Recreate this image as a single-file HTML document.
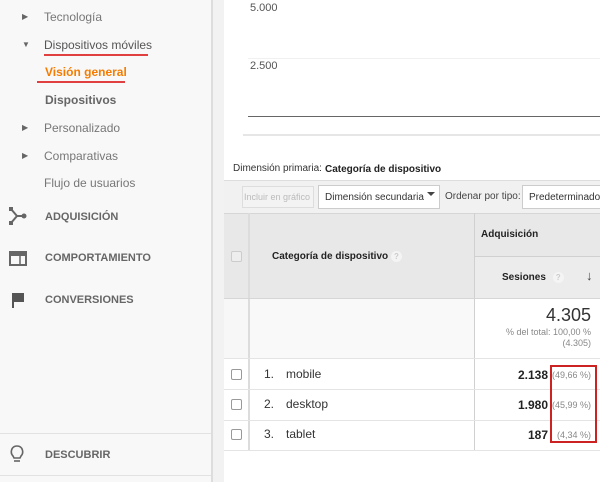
<!DOCTYPE html>
<html><head><meta charset="utf-8"><style>
*{margin:0;padding:0;box-sizing:border-box}
body{width:600px;height:482px;overflow:hidden;font-family:"Liberation Sans",Arial,sans-serif;background:#fff;position:relative}
.a{position:absolute}
.sb{left:0;top:0;width:211px;height:482px;background:#f8f8f8}
.nav{font-size:12px;color:#777;left:44px}
.tri{font-size:8px;color:#666;left:22px}
.big{font-size:11px;font-weight:bold;color:#666;left:45px}
.cb{width:11px;height:11px;border:1px solid #999;border-radius:2px;background:#fff}
</style></head><body>
<div class="a sb"></div>
<div class="a" style="left:211px;top:0;width:2px;height:482px;background:#ddd"></div>
<div class="a" style="left:213px;top:0;width:11px;height:482px;background:#f2f2f2"></div>

<div class="a tri" style="top:12px">▶</div><div class="a nav" style="top:10px">Tecnología</div>
<div class="a tri" style="top:40px">▼</div><div class="a nav" style="top:38px;color:#555">Dispositivos móviles</div>
<div class="a" style="left:44px;top:54px;width:104px;height:2px;background:#e04040"></div>
<div class="a" style="left:45px;top:65px;font-size:12px;font-weight:bold;color:#f57c00">Visión general</div>
<div class="a" style="left:37px;top:81px;width:88px;height:2px;background:#e04040"></div>
<div class="a" style="left:45px;top:93px;font-size:12px;font-weight:bold;color:#666">Dispositivos</div>
<div class="a tri" style="top:123px">▶</div><div class="a nav" style="top:121px">Personalizado</div>
<div class="a tri" style="top:151px">▶</div><div class="a nav" style="top:149px">Comparativas</div>
<div class="a nav" style="top:176px">Flujo de usuarios</div>

<svg class="a" style="left:9px;top:207px" width="18" height="18" viewBox="0 0 18 18"><path d="M2 2 L8 9 L15 9 M8 9 L2 16" stroke="#666" stroke-width="2" fill="none"/><rect x="0" y="0" width="4" height="4" fill="#666"/><rect x="0" y="14" width="4" height="4" fill="#666"/><circle cx="15" cy="9" r="2.5" fill="#666"/></svg>
<div class="a big" style="top:211px">ADQUISICIÓN</div>
<svg class="a" style="left:9px;top:251px" width="18" height="15"><rect x="1" y="1" width="16" height="13" fill="none" stroke="#666" stroke-width="2"/><rect x="1" y="1" width="16" height="4" fill="#666"/><line x1="11" y1="5" x2="11" y2="14" stroke="#666" stroke-width="1.5"/></svg>
<div class="a big" style="top:252px">COMPORTAMIENTO</div>
<svg class="a" style="left:11px;top:292px" width="15" height="17"><path d="M1 1 H13 V10 H3 V16 H1 Z" fill="#555"/></svg>
<div class="a big" style="top:294px">CONVERSIONES</div>
<div class="a" style="left:0;top:433px;width:211px;height:1px;background:#e2e2e2"></div>
<svg class="a" style="left:10px;top:445px" width="14" height="20"><path d="M3 11 C0 8 1 1 7 1 C13 1 14 8 11 11 L10 13 H4 Z" fill="none" stroke="#666" stroke-width="1.6"/><line x1="4" y1="16" x2="10" y2="16" stroke="#666" stroke-width="1.6"/></svg>
<div class="a big" style="top:449px">DESCUBRIR</div>
<div class="a" style="left:0;top:475px;width:211px;height:1px;background:#e2e2e2"></div>

<div class="a" style="left:250px;top:2px;font-size:11px;color:#555">5.000</div>
<div class="a" style="left:248px;top:58px;width:352px;height:1px;background:#f0f0f0"></div>
<div class="a" style="left:250px;top:60px;font-size:11px;color:#555">2.500</div>
<div class="a" style="left:248px;top:116px;width:352px;height:1px;background:#666"></div>
<div class="a" style="left:243px;top:134px;width:357px;height:2px;background:#e6e6e6"></div>

<div class="a" style="left:233px;top:163px;font-size:10px;color:#333">Dimensión primaria:</div>
<div class="a" style="left:325px;top:164px;font-size:10px;font-weight:bold;color:#222">Categoría de dispositivo</div>
<div class="a" style="left:224px;top:180px;width:376px;height:33px;background:#f1f1f1;border-top:1px solid #ddd"></div>
<div class="a" style="left:242px;top:186px;width:72px;height:22px;border:1px solid #ddd;background:#f3f3f3;font-size:9px;color:#bbb;padding:5px 1px;white-space:nowrap;overflow:hidden">Incluir en gráfico</div>
<div class="a" style="left:318px;top:185px;width:122px;height:24px;border:1px solid #ccc;background:#fff;font-size:10px;color:#333;padding:6px 6px;white-space:nowrap">Dimensión secundaria</div>
<div class="a" style="left:427px;top:192px;width:0;height:0;border-left:4px solid transparent;border-right:4px solid transparent;border-top:4px solid #444"></div>
<div class="a" style="left:445px;top:191px;font-size:10px;color:#444;white-space:nowrap">Ordenar por tipo:</div>
<div class="a" style="left:522px;top:185px;width:80px;height:24px;border:1px solid #ccc;background:#fff;font-size:10px;color:#333;padding:6px 6px;white-space:nowrap">Predeterminado</div>

<div class="a" style="left:224px;top:213px;width:376px;height:85px;background:#e8e8e8;border-top:1px solid #d6d6d6"></div>
<div class="a" style="left:474px;top:256px;width:126px;height:42px;background:#ececec;border-top:1px solid #d0d0d0"></div>
<div class="a" style="left:474px;top:213px;width:1px;height:238px;background:#d0d0d0"></div>
<div class="a" style="left:248px;top:213px;width:2px;height:238px;background:#dcdcdc"></div>
<div class="a cb" style="left:231px;top:251px;background:#eee;border-color:#ccc"></div>
<div class="a" style="left:272px;top:251px;font-size:10px;font-weight:bold;color:#222">Categoría de dispositivo <span style="display:inline-block;width:11px;height:11px;border-radius:50%;background:#f4f4f4;color:#ccc;font-size:8px;text-align:center;line-height:11px">?</span></div>
<div class="a" style="left:481px;top:229px;font-size:10px;font-weight:bold;color:#222">Adquisición</div>
<div class="a" style="left:502px;top:272px;font-size:10px;font-weight:bold;color:#222">Sesiones <span style="display:inline-block;width:11px;height:11px;border-radius:50%;background:#f4f4f4;color:#ccc;font-size:8px;text-align:center;line-height:11px;margin-left:4px">?</span></div>
<div class="a" style="left:586px;top:268px;font-size:13px;color:#444">↓</div>

<div class="a" style="left:224px;top:298px;width:376px;height:1px;background:#d6d6d6"></div>
<div class="a" style="left:224px;top:299px;width:24px;height:59px;background:#f7f7f7"></div>
<div class="a" style="left:250px;top:299px;width:224px;height:59px;background:#f9f9f9"></div>
<div class="a" style="left:475px;top:305px;width:116px;text-align:right;font-size:18px;color:#333">4.305</div>
<div class="a" style="left:475px;top:327px;width:116px;text-align:right;font-size:9px;color:#888;line-height:11px">% del total: 100,00 %<br>(4.305)</div>

<div class="a" style="left:224px;top:358px;width:376px;height:1px;background:#e4e4e4"></div>
<div class="a" style="left:224px;top:389px;width:376px;height:1px;background:#e4e4e4"></div>
<div class="a" style="left:224px;top:420px;width:376px;height:1px;background:#e4e4e4"></div>
<div class="a" style="left:224px;top:450px;width:376px;height:1px;background:#e4e4e4"></div>

<div class="a cb" style="left:231px;top:369px"></div>
<div class="a" style="left:264px;top:367px;font-size:12px;color:#333">1.</div><div class="a" style="left:286px;top:367px;font-size:12px;color:#333">mobile</div>
<div class="a" style="left:480px;top:368px;width:68px;text-align:right;font-size:12px;font-weight:bold;color:#222">2.138</div>
<div class="a" style="left:552px;top:370px;font-size:9px;color:#888">(49,66 %)</div>
<div class="a cb" style="left:231px;top:399px"></div>
<div class="a" style="left:264px;top:397px;font-size:12px;color:#333">2.</div><div class="a" style="left:286px;top:397px;font-size:12px;color:#333">desktop</div>
<div class="a" style="left:480px;top:398px;width:68px;text-align:right;font-size:12px;font-weight:bold;color:#222">1.980</div>
<div class="a" style="left:552px;top:400px;font-size:9px;color:#888">(45,99 %)</div>
<div class="a cb" style="left:231px;top:429px"></div>
<div class="a" style="left:264px;top:427px;font-size:12px;color:#333">3.</div><div class="a" style="left:286px;top:427px;font-size:12px;color:#333">tablet</div>
<div class="a" style="left:480px;top:428px;width:68px;text-align:right;font-size:12px;font-weight:bold;color:#222">187</div>
<div class="a" style="left:557px;top:430px;font-size:9px;color:#888">(4,34 %)</div>
<div class="a" style="left:550px;top:365px;width:47px;height:78px;border:2px solid #cc2222"></div>
</body></html>
